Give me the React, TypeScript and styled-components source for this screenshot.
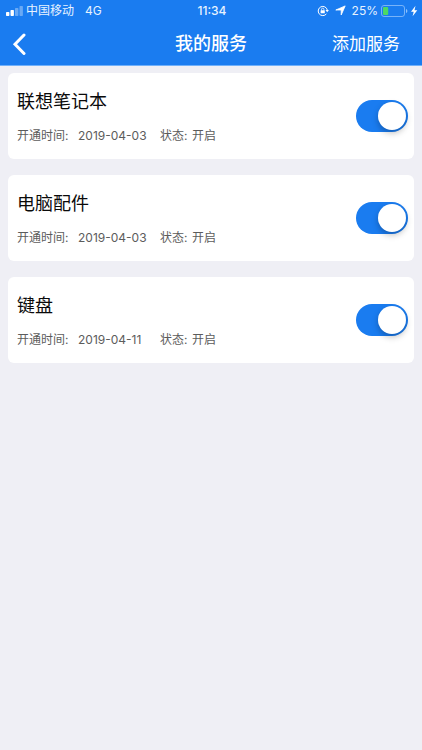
import React, { useState } from "react";
import styled, { createGlobalStyle } from "styled-components";

const BLUE = "#1a7cf0";

const GlobalStyle = createGlobalStyle`
  *, *::before, *::after { box-sizing: border-box; }
  body {
    margin: 0;
    background: #efeff5;
    font-family: Inter, "Noto Sans CJK SC", sans-serif;
  }
  button { font-family: inherit; }
`;

const Screen = styled.div`
  min-height: 100vh;
  background: #efeff5;
`;

const Header = styled.header`
  background: ${BLUE};
  color: #fff;
  border-bottom: 1px solid #70b0fa;
`;

const StatusBar = styled.div`
  display: grid;
  grid-template-columns: 1fr auto 1fr;
  align-items: center;
  height: 21px;
  padding: 0 4px 0 6px;
  font-size: 12px;
  line-height: 20px;
  color: #e6f2ff;
`;

const StatusGroup = styled.div<{ $end?: boolean }>`
  display: flex;
  align-items: center;
  justify-content: ${(p) => (p.$end ? "flex-end" : "flex-start")};
  white-space: nowrap;
`;

const Signal = styled.svg`
  margin-right: 3px;
`;

const Network = styled.span`
  margin-left: 11px;
`;

const Clock = styled.time`
  font-weight: 500;
`;

const Percent = styled.span`
  margin: 0 3px 0 6px;
`;

const NavBar = styled.nav`
  display: grid;
  grid-template-columns: 1fr auto 1fr;
  align-items: center;
  height: 44px;
  padding: 1px 22px 0 8px;
`;

const BackButton = styled.button`
  display: flex;
  justify-self: start;
  padding: 4px;
  border: 0;
  background: none;
  color: inherit;
  cursor: pointer;
`;

const PageTitle = styled.h1`
  margin: 0 0 0 14px;
  font-size: 18px;
  font-weight: 500;
  line-height: 24px;
`;

const AddButton = styled.button`
  justify-self: end;
  padding: 0;
  border: 0;
  background: none;
  color: inherit;
  font-size: 17px;
  line-height: 24px;
  cursor: pointer;
`;

const ServiceList = styled.ul`
  display: flex;
  flex-direction: column;
  gap: 16px;
  margin: 0;
  padding: 7px 8px;
  list-style: none;
`;

const ServiceCard = styled.li`
  display: flex;
  align-items: center;
  justify-content: space-between;
  min-height: 86px;
  padding: 0 6px 0 9px;
  border-radius: 6px;
  background: #fff;
`;

const ServiceInfo = styled.div`
  padding: 14px 0 11px;
`;

const ServiceName = styled.label`
  display: block;
  color: #0a0a0a;
  font-size: 18px;
  line-height: 30px;
`;

const Details = styled.dl`
  display: flex;
  margin: 7px 0 0;
  color: #5c5c5c;
  font-size: 12px;
  line-height: 24px;
  white-space: nowrap;
`;

const Term = styled.dt<{ $width: number }>`
  width: ${(p) => p.$width}px;
`;

const Value = styled.dd<{ $width?: number }>`
  width: ${(p) => (p.$width ? `${p.$width}px` : "auto")};
  margin: 0;
`;

const Switch = styled.input`
  appearance: none;
  flex: none;
  display: flex;
  align-items: center;
  width: 52px;
  height: 32px;
  margin: 0;
  padding: 0 2px;
  border-radius: 16px;
  background: #dcdce0;
  cursor: pointer;

  &::before {
    content: "";
    width: 28px;
    height: 28px;
    border-radius: 50%;
    background: #fff;
    box-shadow: 0 3px 6px rgba(0, 0, 0, 0.25);
  }

  &:checked {
    justify-content: flex-end;
    background: ${BLUE};
  }
`;

const SERVICES = [
  { id: "laptop", name: "联想笔记本", date: "2019-04-03" },
  { id: "parts", name: "电脑配件", date: "2019-04-03" },
  { id: "keyboard", name: "键盘", date: "2019-04-11" },
];

function SignalIcon() {
  return (
    <Signal width="17" height="10" viewBox="0 0 17 10" fill="#fff" aria-hidden="true">
      <rect x="0" y="6" width="3.4" height="4" rx=".7" />
      <rect x="4.5" y="4" width="3.4" height="6" rx=".7" />
      <rect x="9" y="2" width="3.4" height="8" rx=".7" opacity=".35" />
      <rect x="13.5" y="0" width="3.4" height="10" rx=".7" opacity=".35" />
    </Signal>
  );
}

function RotationLockIcon() {
  return (
    <svg width="12" height="12" viewBox="0 0 12 12" fill="none" stroke="#fff" aria-hidden="true">
      <path d="M9.400 8.900A4.600 4.600 0 1 1 10.300 5" strokeWidth="1" />
      <path d="M8.500 5h3.400l-1.700 2.300z" fill="#fff" stroke="none" />
      <rect x="3.6" y="5.3" width="4.2" height="3" rx=".4" fill="#fff" stroke="none" />
      <path d="M4.500 5.500V4.400a1.200 1.200 0 0 1 2.400 0v1.100" strokeWidth=".8" />
    </svg>
  );
}

const Arrow = styled.svg`
  margin-left: 6px;
`;

function LocationIcon() {
  return (
    <Arrow width="11" height="11" viewBox="0 0 11 11" fill="#fff" aria-hidden="true">
      <path d="M10.200.9 6.200 10V5H.800z" stroke="#fff" strokeWidth=".8" strokeLinejoin="round" />
    </Arrow>
  );
}

function BatteryIcon() {
  return (
    <svg width="37" height="12" viewBox="0 0 37 12" fill="none" aria-hidden="true">
      <rect x=".5" y=".5" width="23" height="11" rx="2.5" stroke="#8fc2fb" strokeWidth=".8" />
      <rect x="2" y="2" width="5.200" height="8" rx="1" fill="#4cd964" />
      <path d="M25 4v4c1.800-.5 1.800-3.500 0-4z" fill="#8fc2fb" />
      <path d="M34.500.8 30 6.800h2.700L31.600 11.200 36.300 5.200h-2.800z" fill="#fff" />
    </svg>
  );
}

function ServiceItem({ id, name, date }: { id: string; name: string; date: string }) {
  const [enabled, setEnabled] = useState(true);
  return (
    <ServiceCard>
      <ServiceInfo>
        <ServiceName htmlFor={id}>{name}</ServiceName>
        <Details>
          <Term $width={61}>开通时间:</Term>
          <Value $width={82}>{date}</Value>
          <Term $width={32}>状态:</Term>
          <Value>{enabled ? "开启" : "关闭"}</Value>
        </Details>
      </ServiceInfo>
      <Switch
        id={id}
        type="checkbox"
        role="switch"
        checked={enabled}
        onChange={(e) => setEnabled(e.target.checked)}
      />
    </ServiceCard>
  );
}

export default function App() {
  return (
    <Screen>
      <GlobalStyle />
      <Header>
        <StatusBar>
          <StatusGroup>
            <SignalIcon />
            <span>中国移动</span>
            <Network>4G</Network>
          </StatusGroup>
          <Clock>11:34</Clock>
          <StatusGroup $end>
            <RotationLockIcon />
            <LocationIcon />
            <Percent>25%</Percent>
            <BatteryIcon />
          </StatusGroup>
        </StatusBar>
        <NavBar>
          <BackButton type="button" aria-label="返回">
            <svg width="14" height="22" viewBox="0 0 14 22" fill="none" aria-hidden="true">
              <path d="M12 2 3 11.200 12 20.500" stroke="#fff" strokeWidth="3" strokeLinecap="round" />
            </svg>
          </BackButton>
          <PageTitle>我的服务</PageTitle>
          <AddButton type="button">添加服务</AddButton>
        </NavBar>
      </Header>
      <main>
        <ServiceList>
          {SERVICES.map((service) => (
            <ServiceItem key={service.id} {...service} />
          ))}
        </ServiceList>
      </main>
    </Screen>
  );
}
